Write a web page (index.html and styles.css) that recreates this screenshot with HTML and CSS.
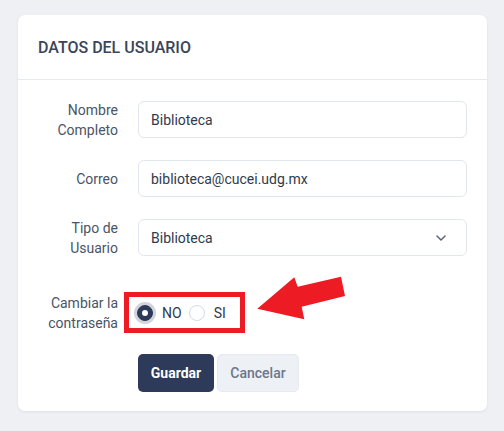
FILE: index.html
```html
<!DOCTYPE html>
<html lang="es">
<head>
<meta charset="utf-8">
<title>Datos del usuario</title>
<link rel="stylesheet" href="styles.css">
</head>
<body>
<div class="page">
  <div class="card">
    <div class="card-header">DATOS DEL USUARIO</div>
    <div class="card-body">
      <div class="row">
        <div class="label">Nombre<br>Completo</div>
        <div class="field">Biblioteca</div>
      </div>
      <div class="row">
        <div class="label">Correo</div>
        <div class="field">biblioteca@cucei.udg.mx</div>
      </div>
      <div class="row">
        <div class="label">Tipo de<br>Usuario</div>
        <div class="field select">
          <span>Biblioteca</span>
          <svg class="chev" width="10" height="6" viewBox="0 0 10 6"><path d="M1 1l4 4 4-4" fill="none" stroke="#5b6475" stroke-width="1.5" stroke-linecap="round" stroke-linejoin="round"/></svg>
        </div>
      </div>
      <div class="row row-radio">
        <div class="label">Cambiar la<br>contraseña</div>
        <div class="radios">
          <span class="radio checked"></span><span class="rlabel">NO</span>
          <span class="radio"></span><span class="rlabel">SI</span>
        </div>
      </div>
      <div class="row row-buttons">
        <div></div>
        <div class="buttons">
          <button class="btn btn-primary">Guardar</button>
          <button class="btn btn-secondary">Cancelar</button>
        </div>
      </div>
    </div>
  </div>
  <div class="annot-box"></div>
  <svg class="annot-arrow" width="504" height="431" viewBox="0 0 504 431">
    <polygon points="257.3,308.7 294.3,277.3 297.7,286.7 341,276.7 345,296 301.7,306.7 304.3,319.3" fill="#ed1c24"/>
  </svg>
</div>
</body>
</html>
```
FILE: styles.css
```css
* { box-sizing: border-box; }
html, body { margin: 0; padding: 0; }
body {
  background: #eef0f4;
  font-family: Roboto, "Liberation Sans", sans-serif;
  width: 504px;
  height: 431px;
  overflow: hidden;
}
.page {
  position: relative;
  padding: 15px 17px 0 18px;
  height: 431px;
}
.card {
  background: #fff;
  border-radius: 7px;
  box-shadow: 0 1px 3px rgba(40, 50, 70, 0.08);
}
.card-header {
  height: 65px;
  border-bottom: 1px solid #e6e9ef;
  padding: 0 20px;
  display: flex;
  align-items: center;
  font-size: 16px;
  font-weight: 500;
  color: #3a4559;
  padding-top: 1px;
}
.card-body {
  padding: 21px 20px 19px 0;
  display: flex;
  flex-direction: column;
  gap: 22px;
}
.row {
  display: grid;
  grid-template-columns: 100px 1fr;
  grid-template-rows: 37px;
  column-gap: 20px;
  align-items: center;
}
.label {
  text-align: right;
  font-size: 14px;
  line-height: 20px;
  color: #4a5466;
}
.field {
  height: 37px;
  border: 1px solid #e2e6ee;
  border-radius: 6px;
  padding: 0 12px;
  display: flex;
  align-items: center;
  font-size: 14px;
  color: #2f3a4d;
}
.select { justify-content: space-between; padding-right: 20px; }
.row-radio { margin-top: 15px; grid-template-rows: 40px; }
.row-buttons { margin-top: -1px; grid-template-rows: 38px; }
.radios {
  display: flex;
  align-items: center;
  font-size: 14px;
  color: #2f3a4d;
}
.radio {
  width: 16px;
  height: 16px;
  border-radius: 50%;
  border: 1px solid #d5dae3;
  background: #fff;
  margin-left: -1px;
}
.radio.checked {
  background: #2d3a59;
  border-color: #2d3a59;
  box-shadow: 0 0 0 3px #d2d5dc;
  display: flex;
  align-items: center;
  justify-content: center;
}
.radio.checked::after {
  content: "";
  width: 6px;
  height: 6px;
  border-radius: 50%;
  background: #fff;
}
.rlabel { margin-left: 9px; margin-right: 8px; }
.buttons { display: flex; gap: 3px; }
.btn {
  height: 38px;
  border-radius: 5px;
  font-family: Roboto, "Liberation Sans", sans-serif;
  font-size: 14px;
  border: none;
  padding: 0;
}
.btn-primary {
  width: 76px;
  background: #2d3a59;
  color: #fff;
  font-weight: 700;
}
.btn-secondary {
  width: 82px;
  background: #edf0f4;
  border: 1px solid #e6e9ef;
  color: #6b778b;
  font-weight: 500;
}
.annot-box {
  position: absolute;
  left: 124px;
  top: 292px;
  width: 121px;
  height: 41px;
  border: 5px solid #ed1c24;
}
.annot-arrow {
  position: absolute;
  left: 0;
  top: 0;
  pointer-events: none;
}
```
